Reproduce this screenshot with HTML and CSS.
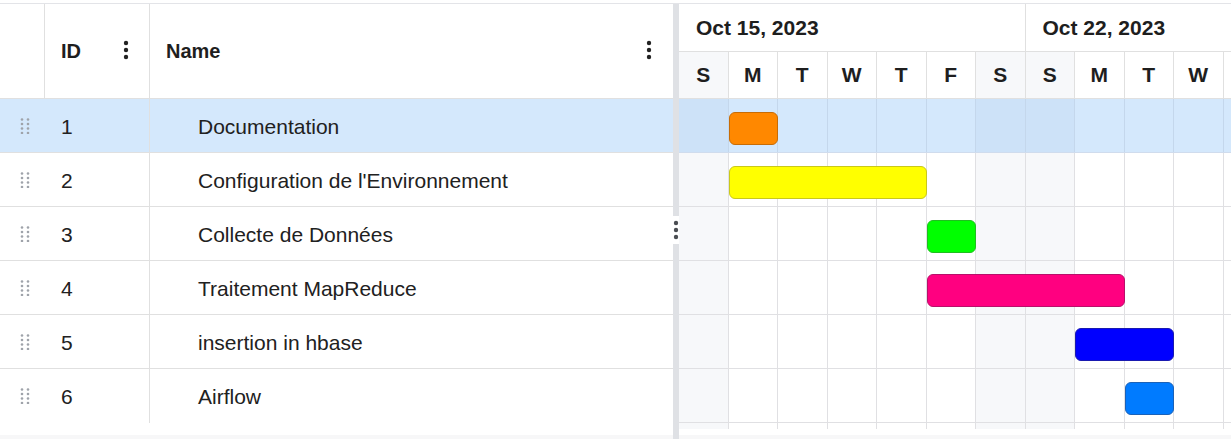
FILE: index.html
```html
<!DOCTYPE html>
<html lang="fr">
<head>
<meta charset="utf-8">
<title>Gantt</title>
<link rel="stylesheet" href="styles.css">
</head>
<body>
<div class="app">
  <div class="grid">
    <div class="grid-head">
      <div class="c-drag"></div>
      <div class="c-id"><span class="h-label">ID</span><svg class="kebab" width="6" height="20" viewBox="0 0 6 20"><circle cx="3" cy="3" r="2.2"/><circle cx="3" cy="10" r="2.2"/><circle cx="3" cy="17" r="2.2"/></svg></div>
      <div class="c-name"><span class="h-label">Name</span><svg class="kebab" width="6" height="20" viewBox="0 0 6 20"><circle cx="3" cy="3" r="2.2"/><circle cx="3" cy="10" r="2.2"/><circle cx="3" cy="17" r="2.2"/></svg></div>
    </div>
    <div class="grid-row selected">
      <div class="c-drag"><svg class="drag" width="10" height="16" viewBox="0 0 10 16"><circle cx="2" cy="1.5" r="1.3"/><circle cx="8" cy="1.5" r="1.3"/><circle cx="2" cy="6" r="1.3"/><circle cx="8" cy="6" r="1.3"/><circle cx="2" cy="10.5" r="1.3"/><circle cx="8" cy="10.5" r="1.3"/><circle cx="2" cy="15" r="1.3"/><circle cx="8" cy="15" r="1.3"/></svg></div>
      <div class="c-id">1</div>
      <div class="c-name"><span class="task">Documentation</span></div>
    </div>
    <div class="grid-row">
      <div class="c-drag"><svg class="drag" width="10" height="16" viewBox="0 0 10 16"><circle cx="2" cy="1.5" r="1.3"/><circle cx="8" cy="1.5" r="1.3"/><circle cx="2" cy="6" r="1.3"/><circle cx="8" cy="6" r="1.3"/><circle cx="2" cy="10.5" r="1.3"/><circle cx="8" cy="10.5" r="1.3"/><circle cx="2" cy="15" r="1.3"/><circle cx="8" cy="15" r="1.3"/></svg></div>
      <div class="c-id">2</div>
      <div class="c-name"><span class="task">Configuration de l'Environnement</span></div>
    </div>
    <div class="grid-row">
      <div class="c-drag"><svg class="drag" width="10" height="16" viewBox="0 0 10 16"><circle cx="2" cy="1.5" r="1.3"/><circle cx="8" cy="1.5" r="1.3"/><circle cx="2" cy="6" r="1.3"/><circle cx="8" cy="6" r="1.3"/><circle cx="2" cy="10.5" r="1.3"/><circle cx="8" cy="10.5" r="1.3"/><circle cx="2" cy="15" r="1.3"/><circle cx="8" cy="15" r="1.3"/></svg></div>
      <div class="c-id">3</div>
      <div class="c-name"><span class="task">Collecte de Données</span></div>
    </div>
    <div class="grid-row">
      <div class="c-drag"><svg class="drag" width="10" height="16" viewBox="0 0 10 16"><circle cx="2" cy="1.5" r="1.3"/><circle cx="8" cy="1.5" r="1.3"/><circle cx="2" cy="6" r="1.3"/><circle cx="8" cy="6" r="1.3"/><circle cx="2" cy="10.5" r="1.3"/><circle cx="8" cy="10.5" r="1.3"/><circle cx="2" cy="15" r="1.3"/><circle cx="8" cy="15" r="1.3"/></svg></div>
      <div class="c-id">4</div>
      <div class="c-name"><span class="task">Traitement MapReduce</span></div>
    </div>
    <div class="grid-row">
      <div class="c-drag"><svg class="drag" width="10" height="16" viewBox="0 0 10 16"><circle cx="2" cy="1.5" r="1.3"/><circle cx="8" cy="1.5" r="1.3"/><circle cx="2" cy="6" r="1.3"/><circle cx="8" cy="6" r="1.3"/><circle cx="2" cy="10.5" r="1.3"/><circle cx="8" cy="10.5" r="1.3"/><circle cx="2" cy="15" r="1.3"/><circle cx="8" cy="15" r="1.3"/></svg></div>
      <div class="c-id">5</div>
      <div class="c-name"><span class="task">insertion in hbase</span></div>
    </div>
    <div class="grid-row last">
      <div class="c-drag"><svg class="drag" width="10" height="16" viewBox="0 0 10 16"><circle cx="2" cy="1.5" r="1.3"/><circle cx="8" cy="1.5" r="1.3"/><circle cx="2" cy="6" r="1.3"/><circle cx="8" cy="6" r="1.3"/><circle cx="2" cy="10.5" r="1.3"/><circle cx="8" cy="10.5" r="1.3"/><circle cx="2" cy="15" r="1.3"/><circle cx="8" cy="15" r="1.3"/></svg></div>
      <div class="c-id">6</div>
      <div class="c-name"><span class="task">Airflow</span></div>
    </div>
  </div>

  <div class="splitter">
    <div class="handle"><svg width="6" height="20" viewBox="0 0 6 20"><circle cx="3" cy="3" r="2.2"/><circle cx="3" cy="10" r="2.2"/><circle cx="3" cy="17" r="2.2"/></svg></div>
  </div>

  <div class="gantt">
    <div class="g-head">
      <div class="weeks">
        <div class="week">Oct 15, 2023</div>
        <div class="week">Oct 22, 2023</div>
      </div>
      <div class="days">
        <div class="day we">S</div><div class="day">M</div><div class="day">T</div><div class="day">W</div><div class="day">T</div><div class="day">F</div><div class="day we">S</div>
        <div class="day we">S</div><div class="day">M</div><div class="day">T</div><div class="day">W</div><div class="day"></div>
      </div>
    </div>
    <div class="g-body">
      <div class="g-row selected">
        <div class="cell we"></div><div class="cell"></div><div class="cell"></div><div class="cell"></div><div class="cell"></div><div class="cell"></div><div class="cell we"></div><div class="cell we"></div><div class="cell"></div><div class="cell"></div><div class="cell"></div><div class="cell"></div>
        <div class="bar orange" style="left:49.5px;width:49px"></div>
      </div>
      <div class="g-row">
        <div class="cell we"></div><div class="cell"></div><div class="cell"></div><div class="cell"></div><div class="cell"></div><div class="cell"></div><div class="cell we"></div><div class="cell we"></div><div class="cell"></div><div class="cell"></div><div class="cell"></div><div class="cell"></div>
        <div class="bar yellow" style="left:49.5px;width:198px"></div>
      </div>
      <div class="g-row">
        <div class="cell we"></div><div class="cell"></div><div class="cell"></div><div class="cell"></div><div class="cell"></div><div class="cell"></div><div class="cell we"></div><div class="cell we"></div><div class="cell"></div><div class="cell"></div><div class="cell"></div><div class="cell"></div>
        <div class="bar green" style="left:247.5px;width:49px"></div>
      </div>
      <div class="g-row">
        <div class="cell we"></div><div class="cell"></div><div class="cell"></div><div class="cell"></div><div class="cell"></div><div class="cell"></div><div class="cell we"></div><div class="cell we"></div><div class="cell"></div><div class="cell"></div><div class="cell"></div><div class="cell"></div>
        <div class="bar pink" style="left:247.5px;width:198px"></div>
      </div>
      <div class="g-row">
        <div class="cell we"></div><div class="cell"></div><div class="cell"></div><div class="cell"></div><div class="cell"></div><div class="cell"></div><div class="cell we"></div><div class="cell we"></div><div class="cell"></div><div class="cell"></div><div class="cell"></div><div class="cell"></div>
        <div class="bar blue" style="left:396px;width:99px"></div>
      </div>
      <div class="g-row">
        <div class="cell we"></div><div class="cell"></div><div class="cell"></div><div class="cell"></div><div class="cell"></div><div class="cell"></div><div class="cell we"></div><div class="cell we"></div><div class="cell"></div><div class="cell"></div><div class="cell"></div><div class="cell"></div>
        <div class="bar sky" style="left:445.5px;width:49px"></div>
      </div>
      <div class="g-row filler">
        <div class="cell we"></div><div class="cell"></div><div class="cell"></div><div class="cell"></div><div class="cell"></div><div class="cell"></div><div class="cell we"></div><div class="cell we"></div><div class="cell"></div><div class="cell"></div><div class="cell"></div><div class="cell"></div>
      </div>
    </div>
  </div>
</div>
<div class="hscroll"></div>
</body>
</html>
```

FILE: styles.css
```css
* { box-sizing: border-box; }

html, body {
  margin: 0;
  padding: 0;
  background: #ffffff;
  font-family: "Liberation Sans", Arial, sans-serif;
  color: #212121;
  overflow: hidden;
}

.app {
  margin-top: 3px;
  border-top: 1px solid #e3e4e8;
  height: 432px;
  display: flex;
}

/* ---------- left grid ---------- */
.grid {
  width: 673px;
  flex: none;
  display: flex;
  flex-direction: column;
}

.grid-head {
  height: 95px;
  display: flex;
  border-bottom: 1px solid #e0e0e0;
}

.grid-head .c-drag { border-right: 1px solid #e0e0e0; }

.c-drag {
  width: 45px;
  flex: none;
  display: flex;
  align-items: center;
  justify-content: center;
}

.c-id {
  width: 105px;
  flex: none;
  display: flex;
  align-items: center;
  justify-content: space-between;
  padding: 0 20px 0 16px;
  border-right: 1px solid #e0e0e0;
  font-size: 21px;
}

.c-name {
  flex: 1;
  display: flex;
  align-items: center;
  justify-content: space-between;
  padding: 0 20px 0 16px;
  font-size: 21px;
}

.h-label {
  font-weight: bold;
  font-size: 20px;
  color: #1e1e1e;
}

.kebab { fill: #222; display: block; margin-top: -2px; }

.grid-head .c-name .kebab { margin-right: 1px; }

.grid-row {
  height: 54px;
  display: flex;
  border-bottom: 1px solid #e0e0e0;
}

.grid-row > .c-id,
.grid-row > .c-name { padding-top: 2px; }

.grid-row.last { border-bottom: none; }

.grid-row.selected { background: #d4e8fc; }

.drag { fill: #9fa3aa; display: block; margin-left: 4px; }

.task {
  padding-left: 32px;
  font-size: 21px;
  color: #212121;
}

/* ---------- splitter ---------- */
.splitter {
  width: 6px;
  flex: none;
  background: #dfe1e5;
  display: flex;
  align-items: center;
  height: 436px;
}

.splitter .handle {
  width: 6px;
  height: 28px;
  background: #ffffff;
  display: flex;
  align-items: center;
  justify-content: center;
  margin-top: 16px;
}

.splitter .handle svg { fill: #4a4d52; display: block; }

/* ---------- gantt ---------- */
.gantt {
  flex: 1;
  overflow: hidden;
  display: flex;
  flex-direction: column;
}

.g-head {
  border-bottom: 1px solid #e0e0e0;
}

.weeks {
  height: 48px;
  display: flex;
  border-bottom: 1px solid #e0e0e0;
}

.week {
  width: 346.5px;
  flex: none;
  display: flex;
  align-items: center;
  padding-left: 17px;
  font-weight: bold;
  font-size: 21px;
  border-right: 1px solid #e0e0e0;
  color: #1e1e1e;
}

.week:last-child { border-right: none; }

.days {
  height: 46px;
  display: flex;
}

.day {
  width: 49.5px;
  flex: none;
  display: flex;
  align-items: center;
  justify-content: center;
  font-weight: bold;
  font-size: 21px;
  color: #1e1e1e;
  border-right: 1px solid #e0e0e0;
}

.day.we { background: #f7f8fa; }

.g-body { display: flex; flex-direction: column; }

.g-row {
  position: relative;
  height: 54px;
  display: flex;
  border-bottom: 1px solid #e0e0e3;
}

.g-row.filler {
  height: 6px;
  border-bottom: none;
}

.cell {
  width: 49.5px;
  flex: none;
  border-right: 1px solid #e0e0e3;
}

.cell.we { background: #f7f8fa; }

.g-row.selected { background: #d4e8fc; border-bottom-color: #d0dced; }
.g-row.selected .cell { border-right-color: #c4d7ec; }
.g-row.selected .cell.we { background: #cde2f8; }

.bar {
  position: absolute;
  top: 13px;
  height: 33px;
  border-radius: 6px;
  border: 1px solid rgba(0, 0, 0, 0.22);
}

.bar.orange { background: #ff8800; border-color: #c76c06; }
.bar.yellow { background: #ffff00; border-color: #c9c81a; }
.bar.green  { background: #00ff00; border-color: #1fbf1f; }
.bar.pink   { background: #ff0080; border-color: #b8106a; }
.bar.blue   { background: #0000ff; border-color: #1a1ab0; }
.bar.sky    { background: #007bff; border-color: #1b62b8; }

.hscroll {
  height: 5px;
  background: #f7f7f8;
}
```
